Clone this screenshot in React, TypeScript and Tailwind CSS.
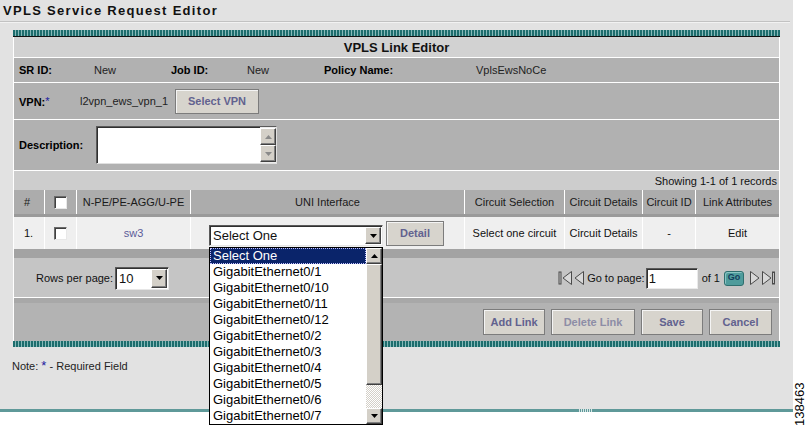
import React from "react";

const TEAL =
  "bg-[repeating-linear-gradient(90deg,#1d6d6d_0px,#1d6d6d_2px,#86b8b8_2px,#86b8b8_3px)]";

function Checkbox() {
  return (
    <div className="w-[13px] h-[13px] bg-white border border-t-[#6b6b6b] border-l-[#6b6b6b] border-b-[#e8e8e8] border-r-[#e8e8e8] shadow-[inset_1px_1px_0_#404040]" />
  );
}

function ArrowBtn({ dir = "down", dim }: { dir?: "down" | "up"; dim?: boolean }) {
  const c = dim ? "#8a8a8a" : "#000";
  return (
    <div className="w-[16px] h-full bg-[#d4d0c8] border border-t-white border-l-white border-b-[#404040] border-r-[#404040] flex items-center justify-center shadow-[inset_-1px_-1px_0_#808080]">
      <svg width="7" height="4" viewBox="0 0 7 4">
        {dir === "down" ? <path d="M0 0h7L3.5 4z" fill={c} /> : <path d="M0 4h7L3.5 0z" fill={c} />}
      </svg>
    </div>
  );
}

function Btn({ label, w, dim }: { label: string; w: string; dim?: boolean }) {
  return (
    <div
      className={`${w} h-[26px] flex items-center justify-center bg-[#d7d4cd] border border-[#7c7c7c] shadow-[inset_1px_1px_0_#f4f4f4] text-[11px] font-bold ${
        dim ? "text-[#8d8da6]" : "text-[#62628f]"
      }`}
    >
      {label}
    </div>
  );
}

function Tri({ dir, bar }: { dir: "l" | "r"; bar?: boolean }) {
  return (
    <svg width={bar ? 15 : 11} height="16" viewBox={bar ? "0 0 15 16" : "0 0 11 16"}>
      {dir === "l" ? (
        <>
          {bar && <rect x="1" y="2" width="2" height="12" fill="none" stroke="#4a4a4a" strokeWidth="1" />}
          <path d={bar ? "M13.5 1.5v13L5 8z" : "M9.5 1.5v13L1 8z"} fill="#d8d8d8" stroke="#4a4a4a" strokeWidth="1" />
        </>
      ) : (
        <>
          <path d="M1.5 1.5v13L10 8z" fill="#d8d8d8" stroke="#4a4a4a" strokeWidth="1" />
          {bar && <rect x="11.5" y="2" width="2" height="12" fill="none" stroke="#4a4a4a" strokeWidth="1" />}
        </>
      )}
    </svg>
  );
}

const items = [
  "Select One",
  "GigabitEthernet0/1",
  "GigabitEthernet0/10",
  "GigabitEthernet0/11",
  "GigabitEthernet0/12",
  "GigabitEthernet0/2",
  "GigabitEthernet0/3",
  "GigabitEthernet0/4",
  "GigabitEthernet0/5",
  "GigabitEthernet0/6",
  "GigabitEthernet0/7",
];

export default function App() {
  return (
    <div className="w-[806px] h-[426px] bg-white flex relative overflow-hidden font-['Liberation_Sans',Arial,sans-serif] text-black">
      <div className="w-[793px] flex flex-col">
        <div className="h-[409px] bg-[#e2e2e2] flex flex-col">
          {/* title */}
          <div className="h-[21px] pl-[3px] pt-[3px] text-[13px] leading-[15px] font-bold tracking-[1.3px] text-[#111]">
            VPLS Service Request Editor
          </div>
          <div className="h-px bg-[#c2c2c2] mr-[3px]" />
          <div className="h-px bg-[#f2f2f2] mr-[3px]" />

          {/* panel */}
          <div className="ml-[13px] w-[767px] mt-[7px] flex flex-col text-[11px]">
            <div className={`h-[6px] ${TEAL}`} />
            <div className="h-px bg-[#111]" />
            <div className="border-x border-white flex flex-col">
              <div className="h-[21px] pt-px bg-[#d2d2d2] border-b border-white flex items-center justify-center text-[13px] font-bold text-[#111]">
                VPLS Link Editor
              </div>
              <div className="h-[25px] pt-px bg-[#b1b1b1] border-b border-white flex items-center pl-[5px]">
                <span className="w-[75px] font-bold">SR ID:</span>
                <span className="w-[77px] text-[#222]">New</span>
                <span className="w-[76px] font-bold">Job ID:</span>
                <span className="w-[77px] text-[#222]">New</span>
                <span className="w-[152px] font-bold">Policy Name:</span>
                <span className="text-[#222]">VplsEwsNoCe</span>
              </div>
              <div className="h-[37px] bg-[#b1b1b1] border-b border-white flex items-center pl-[5px]">
                <span className="w-[61px] font-bold pt-[2px]">
                  VPN:<sup className="text-[#1a1aa0] text-[11px] font-normal relative -top-[1px]">*</sup>
                </span>
                <span className="w-[95px] text-[#222]">l2vpn_ews_vpn_1</span>
                <div className="w-[84px] h-[25px] flex items-center justify-center bg-[#d7d4cd] border border-[#7c7c7c] shadow-[inset_1px_1px_0_#f4f4f4] font-bold text-[#62628f]">
                  Select VPN
                </div>
              </div>
              <div className="h-[51px] bg-[#b1b1b1] border-b border-white flex items-center pl-[5px]">
                <span className="w-[77px] font-bold">Description:</span>
                <div className="w-[181px] h-[38px] bg-white border border-t-[#5a5a5a] border-l-[#5a5a5a] border-b-[#e0e0e0] border-r-[#e0e0e0] shadow-[inset_1px_1px_0_#303030] flex justify-end">
                  <div className="w-[16px] h-full flex flex-col justify-between bg-[#ececec] py-px pr-px">
                    <div className="h-[17px]">
                      <ArrowBtn dir="up" dim />
                    </div>
                    <div className="h-[17px]">
                      <ArrowBtn dir="down" dim />
                    </div>
                  </div>
                </div>
              </div>
              <div className="h-[19px] pt-px bg-[#cdcdcd] flex items-center justify-end pr-[2px] text-[#111]">
                Showing 1-1 of 1 records
              </div>
              {/* table header */}
              <div className="h-[27px] bg-[#acacac] border-b-[3px] border-[#9a9a9a] flex text-[#1a1a1a]">
                <div className="w-[31px] border-r border-white flex items-center pl-[10px]">#</div>
                <div className="w-[32px] border-r border-white flex items-center justify-center">
                  <Checkbox />
                </div>
                <div className="w-[114px] border-r border-white flex items-center justify-center">N-PE/PE-AGG/U-PE</div>
                <div className="w-[274px] border-r border-white flex items-center justify-center">UNI Interface</div>
                <div className="w-[100px] border-r border-white flex items-center justify-center">Circuit Selection</div>
                <div className="w-[78px] border-r border-white flex items-center justify-center">Circuit Details</div>
                <div className="w-[53px] border-r border-white flex items-center justify-center">Circuit ID</div>
                <div className="flex-1 flex items-center justify-center">Link Attributes</div>
              </div>
              {/* data row */}
              <div className="h-[32px] bg-[#efefef] flex text-[#111]">
                <div className="w-[31px] border-r border-white flex items-center pl-[10px]">1.</div>
                <div className="w-[32px] border-r border-white flex items-center justify-center">
                  <Checkbox />
                </div>
                <div className="w-[114px] border-r border-white flex items-center justify-center text-[#5b5b99]">sw3</div>
                <div className="w-[274px] border-r border-white flex items-end pb-[3px] pl-[18px]">
                  <div className="w-[174px] h-[21px] bg-white border border-t-[#5a5a5a] border-l-[#5a5a5a] border-b-[#e6e6e6] border-r-[#e6e6e6] shadow-[inset_1px_1px_0_#303030] flex items-center">
                    <span className="flex-1 pl-[3px] text-[13px] leading-none">Select One</span>
                    <div className="h-full py-px pr-px">
                      <ArrowBtn />
                    </div>
                  </div>
                  <div className="ml-[3px] w-[58px] h-[25px] flex items-center justify-center bg-[#d7d4cd] border border-[#7c7c7c] shadow-[inset_1px_1px_0_#f4f4f4] font-bold text-[#62628f]">
                    Detail
                  </div>
                </div>
                <div className="w-[100px] border-r border-white flex items-center justify-center">Select one circuit</div>
                <div className="w-[78px] border-r border-white flex items-center justify-center">Circuit Details</div>
                <div className="w-[53px] border-r border-white flex items-center justify-center">-</div>
                <div className="flex-1 flex items-center justify-center">Edit</div>
              </div>
              <div className="h-[9px] bg-[#a3a3a3]" />
              {/* pagination */}
              <div className="h-[40px] pt-px bg-[#c5c5c5] border-b border-white flex items-center pl-[22px] pr-[3px] text-[#111]">
                <span className="text-[11px]">Rows per page:</span>
                <div className="ml-[2px] w-[54px] h-[23px] bg-white border border-t-[#5a5a5a] border-l-[#5a5a5a] border-b-[#e6e6e6] border-r-[#e6e6e6] shadow-[inset_1px_1px_0_#303030] flex items-center">
                  <span className="flex-1 pl-[3px] text-[13px] leading-none">10</span>
                  <div className="h-full py-px pr-px">
                    <ArrowBtn />
                  </div>
                </div>
                <div className="flex-1" />
                <Tri dir="l" bar />
                <span className="ml-[1px]">
                  <Tri dir="l" />
                </span>
                <span className="ml-[2px]">Go to page:</span>
                <div className="ml-[1px] w-[52px] h-[21px] bg-white border border-t-[#5a5a5a] border-l-[#5a5a5a] border-b-[#eaeaea] border-r-[#eaeaea] shadow-[inset_1px_1px_0_#303030] flex items-center pl-[2px] text-[13px] leading-none">
                  1
                </div>
                <span className="ml-[4px]">of 1</span>
                <div className="ml-[4px] w-[20px] h-[15px] rounded-[3px] bg-[#4f9c9c] border border-[#2f6f6f] shadow-[inset_1px_1px_0_#8cc4c4] flex items-center justify-center text-[9px] font-bold text-[#143c5c]">
                  Go
                </div>
                <span className="ml-[5px]">
                  <Tri dir="r" />
                </span>
                <span className="ml-[1px]">
                  <Tri dir="r" bar />
                </span>
              </div>
              <div className="h-[5px] bg-[#a8a8a8]" />
              {/* buttons */}
              <div className="h-[38px] bg-[#b3b3b3] flex items-center justify-end gap-[6px] pr-[7px]">
                <Btn label="Add Link" w="w-[62px]" />
                <Btn label="Delete Link" w="w-[84px]" dim />
                <Btn label="Save" w="w-[62px]" />
                <Btn label="Cancel" w="w-[63px]" />
              </div>
            </div>
            <div className={`h-[6px] ${TEAL}`} />
          </div>

          <div className="mt-[11px] pl-[12px] text-[11px] text-[#222]">
            Note: <span className="text-[#1a1aa0] text-[13px] leading-none">*</span> - Required Field
          </div>
        </div>
        <div className="h-[3px] bg-[#5f9999] flex">
          <div className="ml-[578px] w-[14px] h-full bg-[repeating-linear-gradient(90deg,#5f9999_0px,#5f9999_1px,#d6e6e6_1px,#d6e6e6_2px)]" />
        </div>
      </div>
      <div className="flex-1 relative">
        <div className="absolute left-[-1px] bottom-[0px] origin-bottom-left -rotate-90 translate-x-[16px] text-[13px] leading-[16px] text-black whitespace-nowrap">
          138463
        </div>
      </div>

      {/* dropdown list overlay */}
      <div className="absolute left-[209px] top-[247px] w-[174px] h-[178px] bg-white border border-black flex">
        <div className="flex-1 flex flex-col">
          {items.map((t, i) => (
            <div
              key={t}
              className={`h-[16px] pl-[3px] text-[13px] leading-[16px] ${
                i === 0
                  ? "bg-[#0a246a] text-white outline-1 outline-dotted outline-[#c0c0ff] -outline-offset-1"
                  : "text-black"
              }`}
            >
              {t}
            </div>
          ))}
        </div>
        <div className="w-[16px] flex flex-col bg-[repeating-conic-gradient(#d4d0c8_0_25%,#ffffff_0_50%)] bg-[length:2px_2px]">
          <div className="h-[16px]">
            <ArrowBtn dir="up" />
          </div>
          <div className="h-[121px] bg-[#d4d0c8] border border-t-white border-l-white border-b-[#404040] border-r-[#404040] shadow-[inset_-1px_-1px_0_#808080]" />
          <div className="flex-1" />
          <div className="h-[16px]">
            <ArrowBtn dir="down" />
          </div>
        </div>
      </div>
    </div>
  );
}
